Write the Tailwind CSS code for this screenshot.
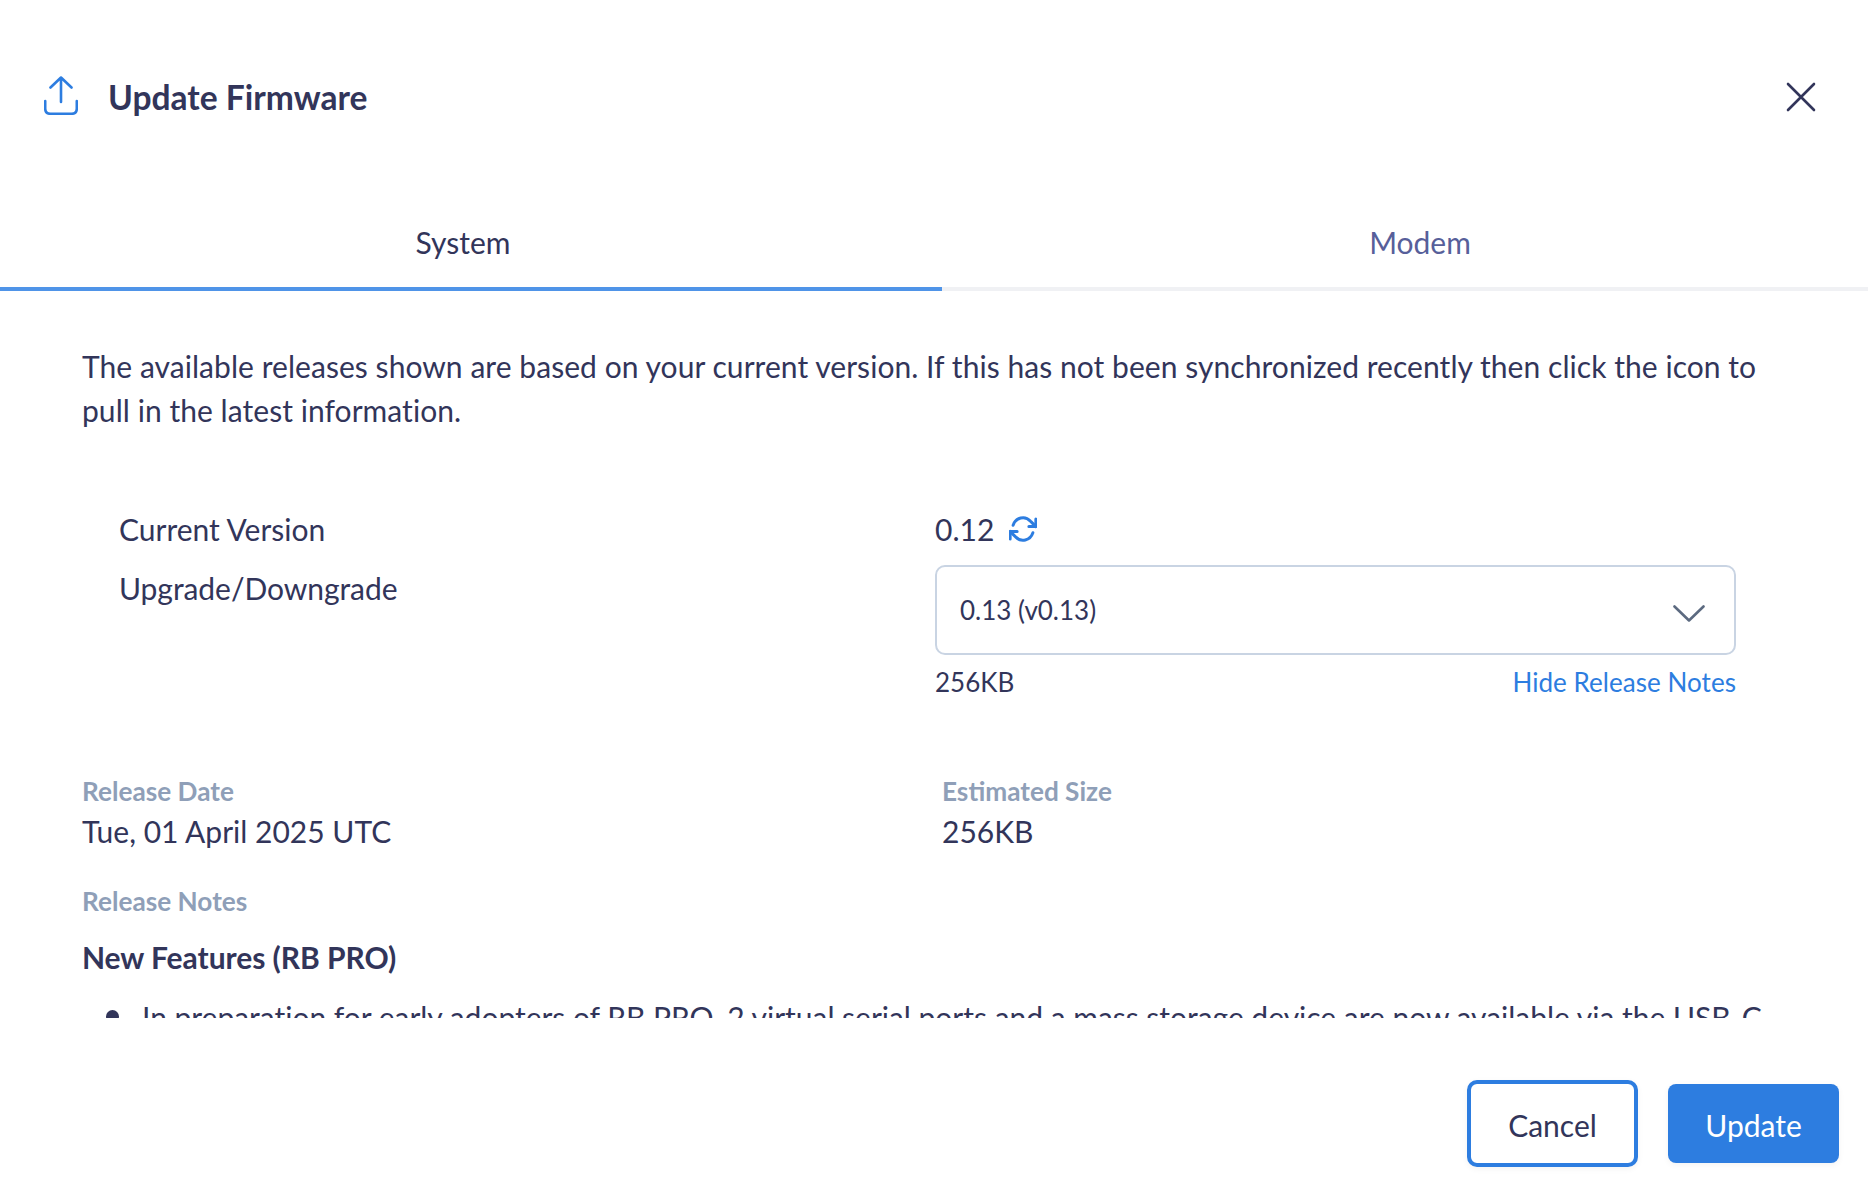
<!DOCTYPE html>
<html lang="en">
<head>
    <meta charset="UTF-8">
    <title>Update Firmware</title>
    <script src="https://cdn.jsdelivr.net/npm/@tailwindcss/browser@4"></script>
</head>
<body class="bg-white font-['Lato',sans-serif] text-[#32355a]">
    <div class="flex flex-col w-[1868px] h-[1202px] overflow-hidden">
        <!-- header -->
        <div class="flex items-center justify-between h-[196px] pl-[44px] pr-[52px]">
            <div class="flex items-center gap-[30px]">
                <svg class="w-[34px] h-[39px] mb-[5px]" viewBox="0 0 34 39" fill="none" stroke="#2d7de0" stroke-width="2.6" stroke-linecap="round" stroke-linejoin="round">
                    <path d="M17 26V1.5M6.5 11.5L17 1.5L27.5 11.5"/>
                    <path d="M1.200 25V32.500C1.200 35.800 3.200 37.800 6.500 37.800H27.500C30.800 37.800 32.800 35.800 32.800 32.500V25"/>
                </svg>
                <h1 class="text-[33.600px] font-bold leading-none">Update Firmware</h1>
            </div>
            <svg class="w-[30px] h-[30px] mb-[2px]" viewBox="0 0 30 30" fill="none" stroke="#32355a" stroke-width="2.6" stroke-linecap="round">
                <path d="M2 2L28 28M28 2L2 28"/>
            </svg>
        </div>

        <!-- tabs -->
        <div class="flex h-[95px] text-[30px]">
            <div class="w-[942px] flex items-center justify-center pr-[16px] pt-[2px] border-b-[4px] border-[#4f94e8]">System</div>
            <div class="flex-1 flex items-center justify-center pl-[30px] pt-[2px] border-b-[4px] border-[#f0f1f4] text-[#575f9a]">Modem</div>
        </div>

        <!-- scrolling body -->
        <div class="h-[727px] overflow-hidden px-[82px]">
            <p class="pt-[53px] text-[30px] leading-[44px] tracking-[0.05px]">The available releases shown are based on your current version. If this has not been synchronized recently then click the icon to pull in the latest information.</p>

            <div class="grid grid-cols-[853px_1fr] mt-[75px] text-[30px]">
                <div class="pl-[37px]">
                    <div class="leading-[44px] h-[59px]">Current Version</div>
                    <div class="leading-[44px] tracking-[-0.05px]">Upgrade/Downgrade</div>
                </div>
                <div class="w-[801px]">
                    <div class="flex items-center gap-[15px] h-[44px] mb-[14px]">
                        <span>0.12</span>
                        <svg class="w-[28px] h-[30px]" viewBox="0 0 24 24" preserveAspectRatio="none" fill="none" stroke="#2d7de0" stroke-width="2.5" stroke-linecap="round" stroke-linejoin="round">
                            <path d="M23 4V10H17"/>
                            <path d="M1 20V14H7"/>
                            <path d="M3.510 9A9 9 0 0 1 18.360 5.640L23 10"/>
                            <path d="M20.490 15A9 9 0 0 1 5.640 18.360L1 14"/>
                        </svg>
                    </div>
                    <div class="flex items-center justify-between h-[90px] pl-[23px] pr-[29px] border-2 border-[#c9d4e3] rounded-[10px] text-[26px]">
                        <span>0.13 (v0.13)</span>
                        <svg class="w-[32px] h-[17px] mt-[6px]" viewBox="0 0 32 17" fill="none" stroke="#5c6a80" stroke-width="2.6" stroke-linecap="round" stroke-linejoin="round">
                            <path d="M1.500 1.500L16 15.500L30.500 1.500"/>
                        </svg>
                    </div>
                    <div class="flex justify-between items-center mt-[7px] text-[26px] leading-[40px]">
                        <span>256KB</span>
                        <span class="text-[#2d7de0] tracking-[0.05px]">Hide Release Notes</span>
                    </div>
                </div>
            </div>

            <div class="grid grid-cols-[860px_1fr] mt-[69px]">
                <div>
                    <div class="text-[26.200px] leading-[40px] font-bold text-[#8f9fb8]">Release Date</div>
                    <div class="text-[30px] leading-[40px]">Tue, 01 April 2025 UTC</div>
                </div>
                <div>
                    <div class="text-[26.200px] leading-[40px] font-bold text-[#8f9fb8]">Estimated Size</div>
                    <div class="text-[30px] leading-[40px]">256KB</div>
                </div>
            </div>

            <div class="mt-[30px] text-[26.200px] leading-[40px] font-bold text-[#8f9fb8]">Release Notes</div>
            <h3 class="mt-[16px] text-[30px] leading-[40px] font-bold tracking-[-0.05px]">New Features (RB PRO)</h3>
            <ul class="mt-[18px] text-[30px] leading-[44px]">
                <li class="flex gap-[23px] pl-[24px]">
                    <span class="shrink-0 w-[13px] h-[13px] mt-[15px] rounded-full bg-[#32355a]"></span>
                    <span class="tracking-[-0.02px]">In preparation for early adopters of RB PRO, 2 virtual serial ports and a mass storage device are now available via the USB-C port.</span>
                </li>
            </ul>
        </div>

        <!-- footer -->
        <div class="flex justify-end items-center gap-[30px] pt-[62px] pr-[29px]">
            <button class="w-[171px] h-[87px] pt-[4px] rounded-[10px] bg-white text-[#32355a] text-[30px] border-4 border-[#2d7de0] shadow-[0_2px_6px_rgba(0,0,0,0.05)]">Cancel</button>
            <button class="w-[171px] h-[79px] pt-[4px] rounded-[8px] bg-[#2d7de0] text-white text-[30px] shadow-[0_2px_6px_rgba(0,0,0,0.05)]">Update</button>
        </div>
    </div>
</body>
</html>
